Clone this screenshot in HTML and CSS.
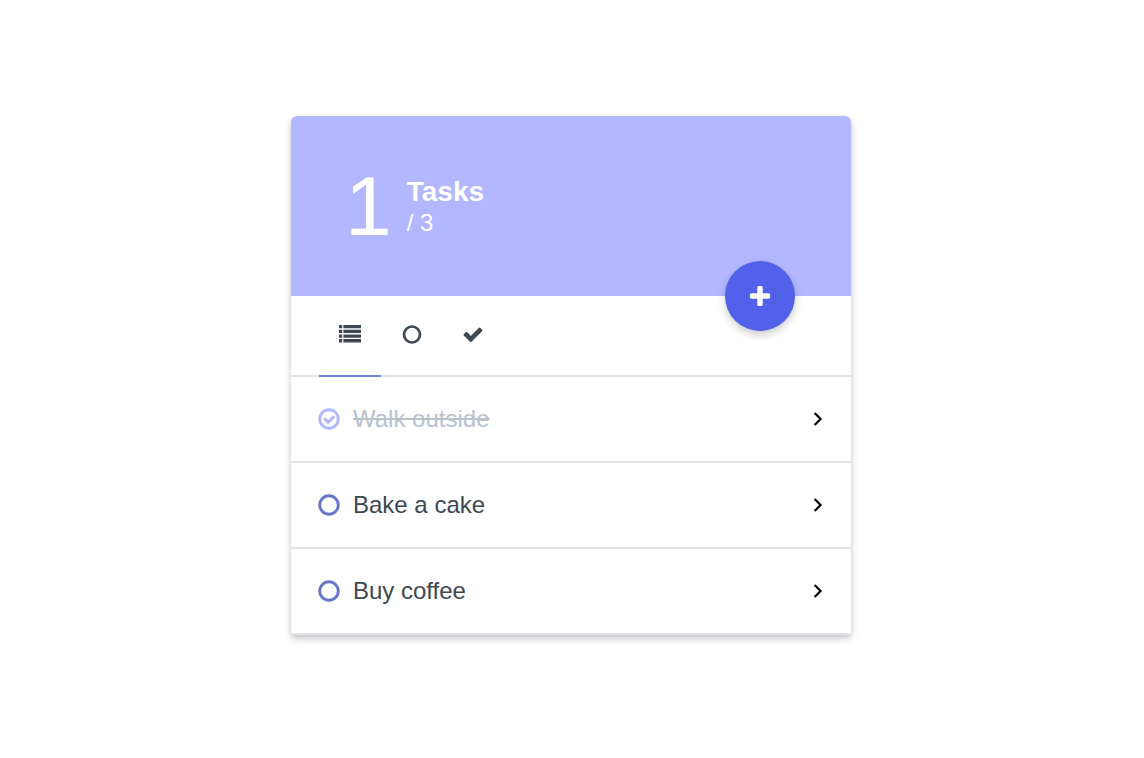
FILE: index.html
```html
<!DOCTYPE html>
<html lang="en">
<head>
<meta charset="utf-8">
<meta name="viewport" content="width=device-width, initial-scale=1">
<title>Tasks</title>
<link rel="stylesheet" href="styles.css">
</head>
<body>
<main class="card">
  <header class="summary">
    <span class="count">1</span>
    <div class="labels">
      <h1 class="title">Tasks</h1>
      <span class="total">/ 3</span>
    </div>
    <button class="add" type="button" aria-label="Add task">
      <svg class="add-icon" viewBox="192 128 1408 1408" aria-hidden="true"><path d="M1600 736v192q0 40-28 68t-68 28h-416v416q0 40-28 68t-68 28h-192q-40 0-68-28t-28-68v-416h-416q-40 0-68-28t-28-68v-192q0-40 28-68t68-28h416v-416q0-40 28-68t68-28h192q40 0 68 28t28 68v416h416q40 0 68 28t28 68z"/></svg>
    </button>
  </header>
  <nav class="tabs" aria-label="Filter tasks">
    <button class="tab tab-active" type="button" aria-label="All tasks">
      <svg class="tab-icon" viewBox="0 0 24 24" aria-hidden="true"><path d="M1 3h3.2v3.3H1zM5.4 3H23v3.3H5.4zM1 7.7h3.2V11H1zM5.4 7.7H23V11H5.4zM1 12.4h3.2v3.3H1zM5.4 12.4H23v3.3H5.4zM1 17.1h3.2v3.3H1zM5.4 17.1H23v3.3H5.4z"/></svg>
    </button>
    <button class="tab" type="button" aria-label="Open tasks">
      <svg class="tab-icon" viewBox="0 0 24 24" aria-hidden="true"><circle cx="12" cy="12.5" r="8" fill="none" stroke="currentColor" stroke-width="2.7"/></svg>
    </button>
    <button class="tab" type="button" aria-label="Completed tasks">
      <svg class="tab-icon" viewBox="-94 -130 1980 1980" aria-hidden="true"><path d="M1671 566q0 40-28 68l-724 724-136 136q-28 28-68 28t-68-28l-136-136-362-362q-28-28-28-68t28-68l136-136q28-28 68-28t68 28l294 295 656-657q28-28 68-28t68 28l136 136q28 28 28 68z"/></svg>
    </button>
  </nav>
  <ul class="tasks">
    <li class="task task-done">
      <button class="toggle" type="button" aria-label="Mark Walk outside as open">
        <svg class="toggle-icon" viewBox="0 0 22 22" aria-hidden="true"><circle cx="11" cy="11" r="9.3" fill="none" stroke="currentColor" stroke-width="2.9"/><path d="M6.2 10.3l4 4 6-6" fill="none" stroke="currentColor" stroke-width="3.1"/></svg>
      </button>
      <span class="name">Walk outside</span>
      <button class="open" type="button" aria-label="Open Walk outside"><svg class="open-icon" viewBox="0 0 10 16" aria-hidden="true"><path d="M1.6 2l6 6-6 6" fill="none" stroke="currentColor" stroke-width="2.2"/></svg></button>
    </li>
    <li class="task">
      <button class="toggle" type="button" aria-label="Mark Bake a cake as done">
        <svg class="toggle-icon" viewBox="0 0 22 22" aria-hidden="true"><circle cx="11" cy="11" r="9.3" fill="none" stroke="currentColor" stroke-width="2.9"/></svg>
      </button>
      <span class="name">Bake a cake</span>
      <button class="open" type="button" aria-label="Open Bake a cake"><svg class="open-icon" viewBox="0 0 10 16" aria-hidden="true"><path d="M1.6 2l6 6-6 6" fill="none" stroke="currentColor" stroke-width="2.2"/></svg></button>
    </li>
    <li class="task">
      <button class="toggle" type="button" aria-label="Mark Buy coffee as done">
        <svg class="toggle-icon" viewBox="0 0 22 22" aria-hidden="true"><circle cx="11" cy="11" r="9.3" fill="none" stroke="currentColor" stroke-width="2.9"/></svg>
      </button>
      <span class="name">Buy coffee</span>
      <button class="open" type="button" aria-label="Open Buy coffee"><svg class="open-icon" viewBox="0 0 10 16" aria-hidden="true"><path d="M1.6 2l6 6-6 6" fill="none" stroke="currentColor" stroke-width="2.2"/></svg></button>
    </li>
  </ul>
</main>
</body>
</html>
```
FILE: styles.css
```css
* {
  box-sizing: border-box;
}

body {
  margin: 0;
  padding: 116px 18px 116px 16px;
  background: #fff;
  color: #3d4852;
  font-family: "Liberation Sans", Arial, sans-serif;
  font-size: 24px;
  line-height: 28px;
}

button {
  margin: 0;
  padding: 0;
  border: 0;
  background: none;
  color: inherit;
  font: inherit;
  cursor: pointer;
}

svg {
  display: block;
  fill: currentColor;
}

.card {
  width: 100%;
  max-width: 560px;
  margin: 0 auto;
  border-radius: 6px 6px 2px 2px;
  background: #fff;
  box-shadow: 0 4px 8px rgba(0, 0, 0, 0.16), 0 2px 4px rgba(0, 0, 0, 0.1);
}

.summary {
  position: relative;
  display: flex;
  align-items: center;
  gap: 15px;
  padding: 42px 54px;
  border-radius: 6px 6px 0 0;
  background: #b2b7ff;
  color: #fff;
}

.count {
  font-size: 84px;
  line-height: 96px;
}

.title {
  margin: 0;
  font-size: 28px;
  line-height: 34px;
}

.total {
  display: block;
}

.add {
  position: absolute;
  right: 56px;
  bottom: -35px;
  display: grid;
  place-items: center;
  width: 70px;
  height: 70px;
  border-radius: 50%;
  background: #5161ea;
  box-shadow: 0 4px 8px rgba(0, 0, 0, 0.2);
}

.add-icon {
  width: 20px;
  height: 20px;
}

.tabs {
  display: flex;
  padding: 0 28px;
  border-bottom: 2px solid #dee4e9;
}

.tab {
  display: grid;
  place-items: center;
  width: 61px;
  margin-bottom: -2px;
  padding: 26px 0 29px;
  border-bottom: 2px solid transparent;
}

.tab-active {
  width: 62px;
  border-bottom-color: #7180dd;
}

.tab-icon {
  width: 24px;
  height: 24px;
}

.tasks {
  margin: 0;
  padding: 0;
  list-style: none;
}

.task {
  display: flex;
  align-items: center;
  gap: 13px;
  padding: 28px 28px 28px 27px;
  border-bottom: 2px solid #dee4e9;
}

.task:last-child {
  border-radius: 0 0 2px 2px;
}

.toggle {
  color: #6574cd;
}

.toggle-icon {
  width: 22px;
  height: 22px;
}

.name {
  flex: 1;
}

.open {
  color: #000;
}

.open-icon {
  width: 10px;
  height: 16px;
}

.task-done .toggle {
  color: #b2b7ff;
}

.task-done .name {
  color: #b8c2cc;
  text-decoration: line-through;
}
```
